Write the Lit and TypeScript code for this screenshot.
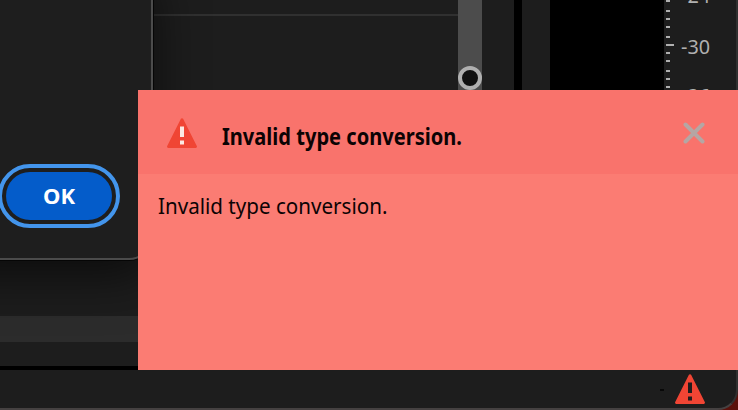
import { css, html, LitElement, svg } from "lit";
import { customElement, property } from "lit/decorators.js";

@customElement("x-alert-icon")
export class AlertIcon extends LitElement {
  @property({ type: String })
  mark = "#fbe9e2";

  static styles = css`
    :host {
      display: block;
      width: 30px;
      height: 30px;
    }

    svg {
      display: block;
    }
  `;

  render() {
    return html`
      <svg width="30" height="30" viewBox="0 0 30 30">
        <path
          fill="#f04534"
          d="M13.9.8a1.25 1.25 0 0 1 2.2 0l13.7 27.3A1.3 1.3 0 0 1 28.7 30H1.3a1.3 1.3 0 0 1-1.1-1.9z"
        />
        <path fill=${this.mark} d="M13 8.5h4v10.5h-4zM13 22.5h4v4h-4z" />
      </svg>
    `;
  }
}

@customElement("x-meter-scale")
export class MeterScale extends LitElement {
  ticks = [0, 10, 18, 26, 36, 44, 52, 60, 70, 78, 86];

  static styles = css`
    :host {
      display: flex;
      color: #b0b0b0;
      font: 20px/24px "Noto Sans", sans-serif;
    }

    svg {
      display: block;
    }

    .labels {
      margin: -16px 0 0 7px;
    }

    .label {
      height: 51px;
      transform: scaleX(0.99);
      transform-origin: 0 0;
    }

    .label + .label {
      height: 49px;
    }
  `;

  render() {
    return html`
      <svg width="10" height="90" viewBox="0 0 10 90" fill="#b0b0b0">
        ${this.ticks.map(
          (y) =>
            svg`<rect x="2" y=${y} width=${y === 44 ? 8 : 4} height="2" />`
        )}
      </svg>
      <div class="labels">
        <div class="label">-24</div>
        <div class="label">-30</div>
        <div class="label">-36</div>
      </div>
    `;
  }
}

@customElement("x-toast")
export class Toast extends LitElement {
  @property({ type: String })
  heading = "";

  @property({ type: String })
  message = "";

  static styles = css`
    :host {
      display: flex;
      flex-direction: column;
      background: #fb7c73;
      color: #0c0304;
      font: 22.5px/30px "Noto Sans", sans-serif;
      white-space: nowrap;
    }

    .header {
      display: flex;
      align-items: center;
      box-sizing: border-box;
      height: 84px;
      padding: 2px 33px 0 29px;
      background: #f9736c;
    }

    .heading {
      flex: 1;
      margin: 7px 0 0 25px;
      font-weight: 700;
    }

    .message {
      padding: 17px 20px;
    }

    .text {
      display: inline-block;
      transform-origin: 0 50%;
    }

    .heading .text {
      transform: scaleX(0.892);
    }

    .message .text {
      transform: scaleX(0.915);
    }
  `;

  render() {
    return html`
      <div class="header">
        <x-alert-icon></x-alert-icon>
        <div class="heading"><span class="text">${this.heading}</span></div>
        <svg width="22" height="22" viewBox="0 0 22 22">
          <path
            d="M2.5 2.5l17 17M19.5 2.5l-17 17"
            stroke="#b5a6a4"
            stroke-width="4"
            stroke-linecap="round"
          />
        </svg>
      </div>
      <div class="message"><span class="text">${this.message}</span></div>
    `;
  }
}

@customElement("app-root")
export class AppRoot extends LitElement {
  static styles = css`
    :host {
      display: block;
      position: relative;
      width: 738px;
      height: 410px;
      overflow: hidden;
      background: #5a110b;
    }

    .window {
      display: flex;
      flex-direction: column;
      box-sizing: border-box;
      height: 410px;
      border-right: 2px solid #303030;
      border-bottom: 2px solid #454141;
      border-bottom-right-radius: 20px;
      overflow: hidden;
      background: #1d1d1d;
    }

    .panels {
      display: flex;
      height: 316px;
    }

    .track {
      width: 458px;
    }

    .rule {
      height: 2px;
      margin-top: 14px;
      background: #303030;
    }

    .slider {
      display: flex;
      align-items: flex-end;
      width: 24px;
      height: 90px;
      background: #4c4c4c;
    }

    .knob {
      box-sizing: border-box;
      width: 24px;
      height: 24px;
      border: 4px solid #b0b0b0;
      border-radius: 50%;
      background: #111;
    }

    .divider {
      width: 8px;
      margin-left: 32px;
      background: #000;
    }

    .meter {
      width: 114px;
      margin-left: 28px;
      background: #000;
    }

    .strip {
      height: 26px;
      background: #2c2c2c;
    }

    .gap {
      height: 4px;
      margin-top: 24px;
      background: #000;
    }

    .status {
      display: flex;
      justify-content: flex-end;
      padding: 4px 31px 0 0;
    }

    .dash {
      width: 4px;
      height: 2px;
      margin: 15px 11px 0 0;
      background: #080808;
    }

    .dialog {
      position: absolute;
      left: -60px;
      top: -40px;
      display: flex;
      align-items: flex-end;
      justify-content: flex-end;
      box-sizing: border-box;
      width: 213px;
      height: 300px;
      padding: 0 31px 30px 0;
      border: 2px solid #4b4b4b;
      border-radius: 24px;
      background: #1e1e1e;
      box-shadow: 0 0 0 1px #050505, 0 16px 50px rgba(0, 0, 0, 0.6);
    }

    .ok {
      box-sizing: border-box;
      width: 122px;
      height: 64px;
      padding: 0;
      border: 4px solid #4395ec;
      border-radius: 32px;
      background: #1e1e1e;
      outline: none;
    }

    .face {
      display: block;
      height: 48px;
      margin: 4px;
      border-radius: 24px;
      background: #045cca;
      color: #fff;
      font: 700 22px/46px "Noto Sans", sans-serif;
    }

    .toast {
      position: absolute;
      left: 138px;
      top: 90px;
      width: 600px;
      height: 280px;
    }
  `;

  render() {
    return html`
      <div class="window">
        <div class="panels">
          <div class="track"><div class="rule"></div></div>
          <div class="slider"><div class="knob"></div></div>
          <div class="divider"></div>
          <div class="meter"></div>
          <x-meter-scale></x-meter-scale>
        </div>
        <div class="strip"></div>
        <div class="gap"></div>
        <div class="status">
          <div class="dash"></div>
          <x-alert-icon mark="#1d1d1d"></x-alert-icon>
        </div>
      </div>
      <div class="dialog">
        <button class="ok"><span class="face">OK</span></button>
      </div>
      <x-toast
        class="toast"
        heading="Invalid type conversion."
        message="Invalid type conversion."
      ></x-toast>
    `;
  }
}
